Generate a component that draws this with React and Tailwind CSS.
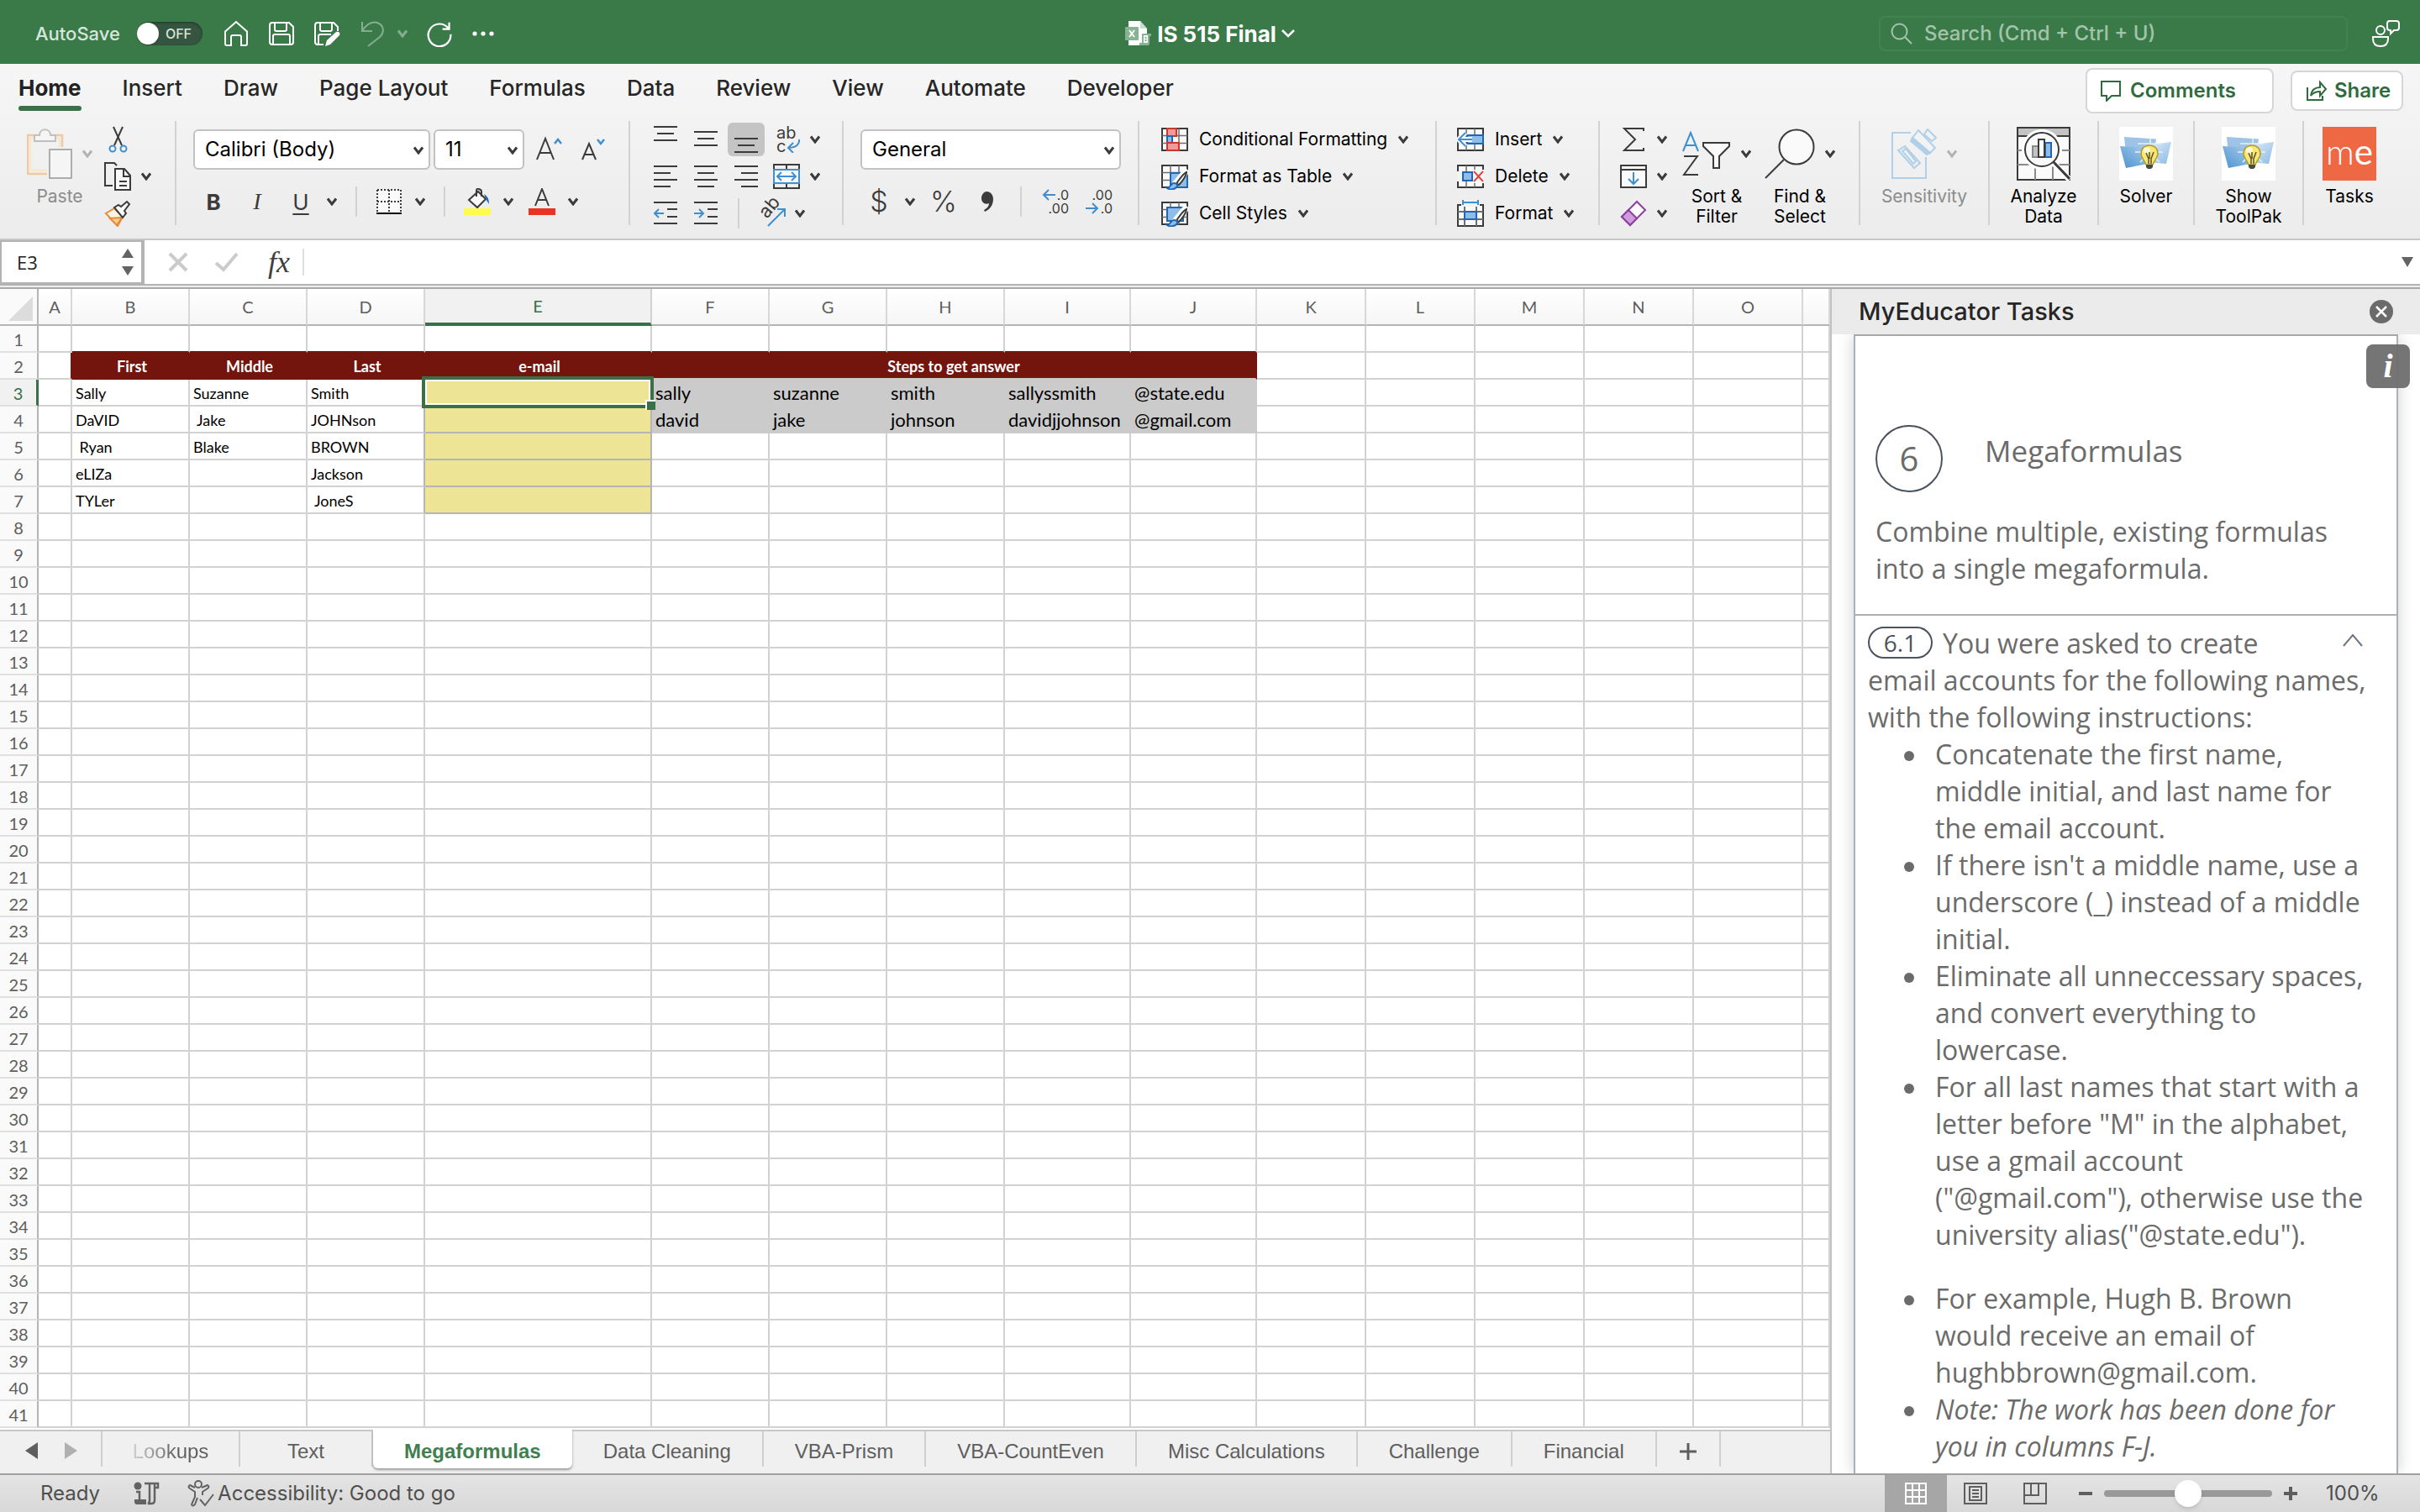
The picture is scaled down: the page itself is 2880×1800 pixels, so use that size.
import React, { useState } from 'react'

const TABS = ['Home', 'Insert', 'Draw', 'Page Layout', 'Formulas', 'Data', 'Review', 'View', 'Automate', 'Developer']

const COLUMNS = [
  { name: 'A', width: 'w-[40px]' },
  { name: 'B', width: 'w-[140px]' },
  { name: 'C', width: 'w-[140px]' },
  { name: 'D', width: 'w-[140px]' },
  { name: 'E', width: 'w-[270px]' },
  { name: 'F', width: 'w-[140px]' },
  { name: 'G', width: 'w-[140px]' },
  { name: 'H', width: 'w-[140px]' },
  { name: 'I', width: 'w-[150px]' },
  { name: 'J', width: 'w-[150px]' },
  { name: 'K', width: 'w-[130px]' },
  { name: 'L', width: 'w-[130px]' },
  { name: 'M', width: 'w-[130px]' },
  { name: 'N', width: 'w-[130px]' },
  { name: 'O', width: 'w-[130px]' },
  { name: '', width: '' },
]

const CELLS = {
  B2: 'First', C2: 'Middle', D2: 'Last', E2: 'e-mail', F2: 'Steps to get answer',
  B3: 'Sally', C3: 'Suzanne', D3: 'Smith', F3: 'sally', G3: 'suzanne', H3: 'smith', I3: 'sallyssmith', J3: '@state.edu',
  B4: 'DaVID', C4: ' Jake', D4: 'JOHNson', F4: 'david', G4: 'jake', H4: 'johnson', I4: 'davidjjohnson', J4: '@gmail.com',
  B5: ' Ryan', C5: 'Blake', D5: 'BROWN',
  B6: 'eLIZa', D6: 'Jackson',
  B7: 'TYLer', D7: ' JoneS',
}

const ROWS = Array.from({ length: 41 }, (_, i) => i + 1)

const SHEETS = ['Lookups', 'Text', 'Megaformulas', 'Data Cleaning', 'VBA-Prism', 'VBA-CountEven', 'Misc Calculations', 'Challenge', 'Financial']

/* ---------- small shared pieces ---------- */

function Chevron({ className = 'text-[#3b3b3b]' }) {
  return (
    <svg className={`w-3 h-2.5 shrink-0 ${className}`} viewBox="0 0 12 10" fill="none" stroke="currentColor" strokeWidth="3">
      <path d="M1 1.500 6 8l5-6.500" />
    </svg>
  )
}

function Divider({ small }) {
  return <div className={small ? 'w-0.5 h-9 bg-[#d2d2d2] shrink-0' : 'w-0.5 h-[124px] bg-[#d2d2d2] shrink-0'} />
}

function Icon({ box = '0 0 32 32', className = 'w-8 h-8', children }) {
  return (
    <svg className={`shrink-0 ${className}`} viewBox={box} fill="none" stroke="#3b3b3b" strokeWidth="2">
      {children}
    </svg>
  )
}

function Split({ label, gap = 'gap-[15px]', children }) {
  return (
    <button aria-label={label} className={`flex items-center ${gap}`}>
      {children}
      <Chevron />
    </button>
  )
}

function Select({ label, value, width }) {
  return (
    <div className={`relative h-12 ${width}`}>
      <select aria-label={label} className="w-full h-12 pl-3 appearance-none bg-white border-2 border-[#c2c2c2] rounded-md text-2xl text-black">
        <option>{value}</option>
      </select>
      <span className="absolute right-2 top-5 pointer-events-none"><Chevron /></span>
    </div>
  )
}

function BigButton({ lines, disabled, chevron, children }) {
  return (
    <button disabled={disabled} className={`flex flex-col items-center text-[21px] leading-6 ${disabled ? 'text-[#8c8c8c]' : 'text-black'}`}>
      <span className="h-[78px] flex items-center gap-3">
        {children}
        {chevron && <Chevron className={disabled ? 'text-[#b3b3b3]' : 'text-[#3b3b3b]'} />}
      </span>
      {lines.map((l) => <span key={l}>{l}</span>)}
    </button>
  )
}

function RowButton({ label, children }) {
  return (
    <button className="h-11 flex items-center gap-[13px] text-[21px] text-black">
      {children}
      <span>{label}</span>
      <Chevron />
    </button>
  )
}

/* ---------- icons ---------- */

function Lines({ rows }) {
  return (
    <Icon box="0 0 28 32" className="w-7 h-8">
      {rows.map(([x1, x2, y]) => <path key={y} d={`M${x1} ${y}H${x2}`} />)}
    </Icon>
  )
}

function GridIcon({ children }) {
  return (
    <Icon>
      <rect x="1" y="3" width="30" height="26" fill="#fafafa" />
      <path d="M1 11.500H31M1 20.500H31M11 3V29M21 3V29" stroke="#6e6e6e" strokeWidth="1.500" />
      {children}
    </Icon>
  )
}

function BrushOverlay() {
  return (
    <>
      <path d="M31 8 16 26" stroke="#fff" strokeWidth="8" />
      <path d="M30 11c-3 1-10 10-12 14l3 1c4-4 9-11 9-15z" fill="#fafafa" stroke="#3b3b3b" strokeWidth="2" />
      <path d="M7 30c4 0 4-6 8-6s5 3 3 5c-3 3-8 3-11 1z" fill="#8fbce8" stroke="#1f67b5" strokeWidth="2" />
    </>
  )
}

function BulbIcon() {
  return (
    <svg className="w-16 h-16 bg-white" viewBox="0 0 64 64">
      <defs>
        <linearGradient id="fan" x1="0" y1="1" x2="1" y2="0">
          <stop offset="0" stopColor="#4a92cf" />
          <stop offset="1" stopColor="#a9cdec" />
        </linearGradient>
        <linearGradient id="fanLight" x1="0" y1="0" x2="1" y2="1">
          <stop offset="0" stopColor="#e4f0fa" />
          <stop offset="1" stopColor="#8dbbe4" />
        </linearGradient>
      </defs>
      <path d="M6 12 44 14.500 41 36 8 34z" fill="#9dc3e6" />
      <path d="M30 22 62 18 56 44 34 42z" fill="url(#fanLight)" />
      <path d="M1 23 34 25 34 44 8 49z" fill="url(#fan)" />
      <path d="M37 14v8M22 20h28M19 30h7M46 30h6M25 42l4-4M48 42l-4-4" stroke="#e6f1fb" strokeWidth="1.500" />
      <path d="M36 22c-6 0-10 4-10 10 0 5 4 7 6 13h8c2-6 6-8 6-13 0-6-4-10-10-10z" fill="#f7e773" stroke="#b49a2d" strokeWidth="1.500" />
      <circle cx="33" cy="28" r="4" fill="#fdf9cf" />
      <path d="M32 31l3 7v6M41 30l-3 8v6M36 30v8" stroke="#5c5233" strokeWidth="1.500" fill="none" />
      <path d="M32 45h8v3l-2 2h-4l-2-2z" fill="#4a4a4a" />
    </svg>
  )
}

function TitleBar() {
  return (
    <header className="h-[76px] pt-1 shrink-0 bg-[#3a7a49] text-white grid grid-cols-[1fr_auto_1fr] items-center">
      <div className="flex items-center pl-[42px]">
        <span id="autosave" className="text-[22px] font-medium text-[#d8e5db]">AutoSave</span>
        <button role="switch" aria-checked="false" aria-labelledby="autosave" className="ml-5 w-[78px] h-7 rounded-full bg-[#355541] flex items-center gap-2 shadow-[inset_0_1px_3px_#1d3a26]">
          <span className="w-[26px] h-[26px] rounded-full bg-white shadow" />
          <span className="text-base font-medium text-[#d8e5db]">OFF</span>
        </button>
        <div className="flex items-center gap-[22px] ml-6">
          <button aria-label="Home">
            <svg className="w-8 h-8" viewBox="0 0 32 32" fill="none" stroke="#fff" strokeWidth="2">
              <path d="M3 13.500 16 2l13 11.500V28q0 2-2 2h-5V20q0-2-2-2h-8q-2 0-2 2v10H5q-2 0-2-2z" />
            </svg>
          </button>
          <button aria-label="Save">
            <svg className="w-8 h-8" viewBox="0 0 32 32" fill="none" stroke="#fff" strokeWidth="2">
              <path d="M5 3h20l5 5v18q0 3-3 3H5q-3 0-3-3V6q0-3 3-3zM8 3v8q0 2 2 2h10q2 0 2-2V3M6 29V19q0-2 2-2h16q2 0 2 2v10" />
            </svg>
          </button>
          <button aria-label="Save and edit">
            <svg className="w-8 h-8" viewBox="0 0 32 32" fill="none" stroke="#fff" strokeWidth="2">
              <path d="M12 29H5q-3 0-3-3V6q0-3 3-3h19l5 5v5M8 3v8q0 2 2 2h10q2 0 2-2V3M6 29V19q0-2 2-2h13" />
              <path d="M14 31l2-7L27 14q3-1 4 1t0 3L20 29z" fill="#fff" stroke="none" />
            </svg>
          </button>
          <button aria-label="Undo" className="flex items-center gap-3.5" disabled>
            <svg className="w-8 h-8" viewBox="0 0 32 32" fill="none" stroke="#85ad8e" strokeWidth="2">
              <path d="M4 2v11h12M4 13C9 5 15 1 22 3c8 3 9 11 3 17L11 31" />
            </svg>
            <Chevron className="text-[#85ad8e]" />
          </button>
          <button aria-label="Redo">
            <svg className="w-8 h-8" viewBox="0 0 36 36" fill="none" stroke="#fff" strokeWidth="2.500">
              <path d="M31 3v9h-9M30 11A15 15 0 1 0 33 19" />
            </svg>
          </button>
          <button aria-label="More">
            <svg className="w-7 h-7" viewBox="0 0 28 28" fill="#fff">
              <circle cx="4" cy="14" r="2.600" /><circle cx="14" cy="14" r="2.600" /><circle cx="24" cy="14" r="2.600" />
            </svg>
          </button>
        </div>
      </div>

      <button className="flex items-center gap-1.5 text-[26px] font-bold">
        <svg className="w-8 h-8" viewBox="0 0 32 32">
          <path d="M4 1h14l8 9v20H4z" fill="#fff" />
          <path d="M18 1l8 9h-8z" fill="#c9dccd" />
          <rect x="0" y="8" width="16" height="16" rx="1" fill="#86b393" />
          <path d="M5 12l6 8M11 12l-6 8" stroke="#fff" strokeWidth="2" />
          <path d="M20 16h11v3h-2v9q0 2-2 2H17v-3h3z" fill="#86b393" />
          <path d="M22 18h5v9h-5z" fill="#fff" />
          <path d="M24.500 20v5" stroke="#86b393" strokeWidth="2" strokeDasharray="2 1" />
        </svg>
        IS 515 Final
        <svg className="w-4 h-3" viewBox="0 0 16 12" fill="none" stroke="#fff" strokeWidth="2.500"><path d="M1 2l7 7 7-7" /></svg>
      </button>

      <div className="flex items-center justify-end pr-6">
        <label className="w-[558px] h-[42px] border-2 border-[#448252] rounded-lg flex items-center pl-3 gap-3.5">
          <svg className="w-[26px] h-[26px] shrink-0" viewBox="0 0 26 26" fill="none" stroke="#a3c3aa" strokeWidth="2">
            <circle cx="10.500" cy="10.500" r="9" /><path d="M17 17l8 8" />
          </svg>
          <input type="search" aria-label="Search" placeholder="Search (Cmd + Ctrl + U)" className="w-full bg-transparent outline-none text-2xl font-medium placeholder:text-[#a3c3aa]" />
        </label>
        <button aria-label="Presence" className="ml-7">
          <svg className="w-[34px] h-8" viewBox="0 0 34 32" fill="none" stroke="#fff" strokeWidth="2">
            <circle cx="11" cy="12" r="5" />
            <path d="M2 20h18v2q0 9-9 9t-9-9zM20 1h10q3 0 3 3v5q0 3-3 3h-3l-4 4v-4h-1q-3 0-3-3V4q0-3 3-3" />
          </svg>
        </button>
      </div>
    </header>
  )
}

function RibbonTabs() {
  const [tab, setTab] = useState('Home')
  return (
    <div className="h-[62px] flex items-start justify-between">
      <nav className="flex gap-[49px] pl-[22px] pt-3">
        {TABS.map((t) => (
          <button
            key={t}
            onClick={() => setTab(t)}
            className={`h-11 text-[26px] leading-[34px] flex flex-col justify-between whitespace-nowrap ${t === tab ? 'font-bold text-[#222]' : 'font-medium text-[#262626]'}`}
          >
            {t}
            {t === tab && <span className="w-full h-1.5 rounded-full bg-[#3a7048]" />}
          </button>
        ))}
      </nav>
      <div className="flex items-center gap-5 pr-5 pt-[5px] text-2xl font-semibold text-[#2f6b3e]">
        <button className="w-[224px] h-[54px] bg-white border-2 border-[#d6d6d6] rounded-lg flex items-center gap-2.5 pl-[15px]">
          <svg className="w-[26px] h-[26px]" viewBox="0 0 26 26" fill="none" stroke="#2f6b3e" strokeWidth="2"><path d="M2 2h22v17H14l-6 6v-6H2z" /></svg>
          Comments
        </button>
        <button className="w-[134px] h-12 bg-white border-2 border-[#d6d6d6] rounded-lg flex items-center gap-2 pl-4">
          <svg className="w-[26px] h-[26px]" viewBox="0 0 26 26" fill="none" stroke="#2f6b3e" strokeWidth="2">
            <path d="M2 9v15h18v-5M6 19c1-7 5-10 11-10V3l7 8-7 8v-5c-5 0-8 1-11 5z" />
          </svg>
          Share
        </button>
      </div>
    </div>
  )
}

function ClipboardGroup() {
  return (
    <div className="w-[208px] pl-8 flex gap-3.5">
      <BigButton lines={['Paste']} disabled chevron>
        <svg className="w-[54px] h-[60px]" viewBox="0 0 54 60" fill="none" strokeWidth="2">
          <path d="M24 54H1V8h41v14" stroke="#eec9a5" strokeWidth="2.500" />
          <path d="M24 50H4V11h35v11" stroke="#f5e8cd" strokeWidth="3" />
          <path d="M9 15V8h6c0-9 13-9 13 0h6v7z" fill="#f5f5f5" stroke="#c0c0c0" />
          <rect x="27" y="25" width="26" height="34" fill="#f5f5f5" stroke="#adadad" />
        </svg>
      </BigButton>
      <div className="flex flex-col">
        <button aria-label="Cut" className="h-11 flex items-center">
          <Icon className="w-8 h-8">
            <path d="M11 1l10 22M22 1L12 23" />
            <circle cx="10" cy="27" r="3.500" stroke="#3f8fd0" /><circle cx="23" cy="27" r="3.500" stroke="#3f8fd0" />
          </Icon>
        </button>
        <div className="h-11 flex items-center">
          <Split label="Copy" gap="gap-3">
            <Icon box="0 0 32 34" className="w-8 h-[34px]">
              <path d="M10 28H1V1h11l3 3" />
              <path d="M13 8h11l7 8v17H13z" fill="#fafafa" /><path d="M23 8v9h8M18 23h9M18 28h9" />
            </Icon>
          </Split>
        </div>
        <button aria-label="Format painter" className="h-11 flex items-center">
          <Icon>
            <path d="M2 16l10-6 10 10-6 11z" fill="#fdf3e4" stroke="#e58b3a" />
            <path d="M7 22l14-1-6 9z" fill="#f7cf93" stroke="#e58b3a" />
            <path d="M12 9l5-3 3 2 7-6 3 3-6 8 2 3-4 5z" fill="#fafafa" />
          </Icon>
        </button>
      </div>
    </div>
  )
}

function FontGroup() {
  return (
    <div className="w-[538px] pl-5 pt-2.5 flex flex-col gap-[18px]">
      <div className="flex items-center">
        <Select label="Font" value="Calibri (Body)" width="w-[282px]" />
        <div className="w-1" />
        <Select label="Font size" value="11" width="w-[108px]" />
        <button aria-label="Increase font size" className="ml-3.5">
          <Icon>
            <path d="M1 28L11 3l10 25M4.500 20h13" /><path d="M22 9l4-5 4 5" stroke="#3f8fd0" strokeWidth="2.500" />
          </Icon>
        </button>
        <button aria-label="Decrease font size" className="ml-[22px]">
          <Icon>
            <path d="M1 28L9 9l8 19M4 22h10" /><path d="M19 4l4 5 4-5" stroke="#3f8fd0" strokeWidth="2.500" />
          </Icon>
        </button>
      </div>
      <div className="h-10 flex items-center pl-2 text-[#3b3b3b]">
        <button className="w-8 font-bold text-[26px]">B</button>
        <button className="w-8 ml-5 font-['Liberation_Serif'] italic text-[28px]">I</button>
        <div className="ml-5">
          <Split label="Underline"><span className="w-8 text-center text-[26px] underline underline-offset-4 decoration-2">U</span></Split>
        </div>
        <div className="mx-[22px]"><Divider small /></div>
        <Split label="Borders">
          <Icon>
            <rect x="2" y="2" width="28" height="28" fill="#fafafa" stroke="none" />
            <path d="M2 2H30M2 16H30M2 2V28M16 2V28M30 2V28" strokeDasharray="2 2" />
            <path d="M1 30H31" stroke="#000" />
          </Icon>
        </Split>
        <div className="mx-[22px]"><Divider small /></div>
        <Split label="Fill color">
          <Icon>
            <path d="M6 14L17 4l9 9-10 10z" fill="#fafafa" /><path d="M15 10V3q0-3 3-2t3 3v6" />
            <path d="M24 7q6 3 6 12l-4-6" fill="#1f67b5" stroke="none" />
            <rect x="0" y="24" width="32" height="8" fill="#fffb4d" stroke="none" />
          </Icon>
        </Split>
        <div className="w-[18px]" />
        <Split label="Font color">
          <Icon>
            <path d="M8 21L16 1l8 20M11 14h10" />
            <rect x="0" y="24" width="32" height="8" fill="#e93323" stroke="none" />
          </Icon>
        </Split>
      </div>
    </div>
  )
}

function AlignGroup() {
  return (
    <div className="w-[252px] pl-7 flex flex-col">
      <div className="h-11 flex items-center">
        <button aria-label="Top align"><Lines rows={[[0, 28, 1], [4, 24, 9], [0, 28, 17]]} /></button>
        <button aria-label="Middle align" className="ml-5"><Lines rows={[[0, 28, 7], [4, 24, 15], [0, 28, 23]]} /></button>
        <button aria-label="Bottom align" className="ml-3 w-11 h-10 rounded-md bg-[#c4c4c4] flex items-center justify-center">
          <Lines rows={[[0, 28, 15], [4, 24, 23], [0, 28, 31]]} />
        </button>
        <div className="w-3.5" />
        <Split label="Wrap text" gap="gap-3">
          <span className="relative w-7 text-xl leading-4 text-left text-[#3b3b3b]">
            <span className="block">ab</span>
            <span className="block">c</span>
            <svg className="absolute right-0 bottom-0 w-4 h-4" viewBox="0 0 16 16" fill="none" stroke="#3f8fd0" strokeWidth="2"><path d="M15 0q1 9-12 10M8 4l-6 6 6 6" /></svg>
          </span>
        </Split>
      </div>
      <div className="h-11 flex items-center">
        <button aria-label="Align left"><Lines rows={[[0, 28, 4], [0, 20, 12], [0, 28, 20], [0, 20, 28]]} /></button>
        <button aria-label="Center" className="ml-5"><Lines rows={[[0, 28, 4], [4, 24, 12], [0, 28, 20], [4, 24, 28]]} /></button>
        <button aria-label="Align right" className="ml-5"><Lines rows={[[0, 28, 4], [8, 28, 12], [0, 28, 20], [8, 28, 28]]} /></button>
        <div className="w-[18px]" />
        <Split label="Merge cells" gap="gap-3">
          <Icon>
            <path d="M1 8V2H31V8M1 24V30H31V24M16 2v6M16 24v6" />
            <rect x="1" y="8" width="30" height="16" fill="#fafafa" stroke="#3f8fd0" />
            <path d="M5 16H27M10 11l-5 5 5 5M22 11l5 5-5 5" stroke="#3f8fd0" />
          </Icon>
        </Split>
      </div>
      <div className="h-11 flex items-center">
        <button aria-label="Decrease indent">
          <Icon box="0 0 28 32" className="w-7 h-8">
            <path d="M0 3H28M16 11H28M16 20H28M0 28H28" /><path d="M1 16H12M6 11l-5 5 5 5" stroke="#3f8fd0" />
          </Icon>
        </button>
        <button aria-label="Increase indent" className="ml-5">
          <Icon box="0 0 28 32" className="w-7 h-8">
            <path d="M0 3H28M16 11H28M16 20H28M0 28H28" /><path d="M0 16H11M6 11l5 5-5 5" stroke="#3f8fd0" />
          </Icon>
        </button>
        <div className="ml-6 mr-[22px]"><Divider small /></div>
        <Split label="Orientation" gap="gap-2.5">
          <span className="relative w-[34px] h-8">
            <span className="absolute left-0 -top-1 -rotate-50 text-[22px] leading-6 text-[#3b3b3b]">ab</span>
            <svg className="absolute right-0 bottom-0 w-6 h-6" viewBox="0 0 24 24" fill="none" stroke="#3f8fd0" strokeWidth="2"><path d="M2 23L22 3M13 3h9v9" /></svg>
          </span>
        </Split>
      </div>
    </div>
  )
}

function NumberGroup() {
  return (
    <div className="w-[350px] pl-5 pt-2.5 flex flex-col gap-[18px]">
      <Select label="Number format" value="General" width="w-[310px]" />
      <div className="h-10 flex items-center pl-1.5 text-[#3b3b3b]">
        <Split label="Currency"><span className="w-8 text-center text-[34px] leading-10 font-light">$</span></Split>
        <button className="w-8 ml-[18px] text-[34px] leading-10 font-light">%</button>
        <button aria-label="Comma style" className="w-8 ml-5 flex justify-center">
          <svg className="w-4 h-7" viewBox="0 0 16 28"><path d="M7 2c5 0 8 4 8 9 0 8-5 13-10 15l-1-2c4-2 6-5 6-8-5 2-9-1-9-6 0-4 3-8 6-8z" fill="#3b3b3b" /></svg>
        </button>
        <div className="ml-[23px] mr-6"><Divider small /></div>
        <button aria-label="Increase decimal" className="relative w-8 text-base leading-4 text-right">
          <span className="block">.0</span>
          <span className="block">.00</span>
          <svg className="absolute left-0 top-0 w-4 h-4" viewBox="0 0 16 16" fill="none" stroke="#3f8fd0" strokeWidth="2"><path d="M2 8H16M8 2L2 8l6 6" /></svg>
        </button>
        <button aria-label="Decrease decimal" className="relative w-8 ml-5 text-base leading-4 text-right">
          <span className="block">.00</span>
          <span className="block">.0</span>
          <svg className="absolute left-0 bottom-0 w-4 h-4" viewBox="0 0 16 16" fill="none" stroke="#3f8fd0" strokeWidth="2"><path d="M0 8H14M8 2l6 6-6 6" /></svg>
        </button>
      </div>
    </div>
  )
}

function StylesGroup() {
  return (
    <div className="w-[352px] pl-[26px] flex flex-col items-start">
      <RowButton label="Conditional Formatting">
        <GridIcon>
          <rect x="7" y="3" width="11" height="9" fill="#f19a9a" stroke="#c9382b" />
          <rect x="7" y="12" width="6" height="8" fill="#8fbce8" stroke="#1f67b5" />
          <rect x="7" y="20" width="14" height="9" fill="#f19a9a" stroke="#c9382b" />
        </GridIcon>
      </RowButton>
      <RowButton label="Format as Table">
        <GridIcon><path d="M11 12H31V29H11z" fill="#8fbce8" stroke="#1f67b5" /><BrushOverlay /></GridIcon>
      </RowButton>
      <RowButton label="Cell Styles">
        <GridIcon><path d="M7 9H26V25H7z" fill="#8fbce8" stroke="#1f67b5" /><BrushOverlay /></GridIcon>
      </RowButton>
    </div>
  )
}

function CellsGroup() {
  return (
    <div className="w-[192px] pl-6 flex flex-col items-start">
      <RowButton label="Insert">
        <GridIcon>
          <rect x="12" y="11" width="19" height="10" fill="#8fbce8" stroke="#1f67b5" />
          <path d="M2 16H18M10 8l-8 8 8 8" stroke="#fff" strokeWidth="6" /><path d="M2 16H18M10 8l-8 8 8 8" stroke="#3f8fd0" />
        </GridIcon>
      </RowButton>
      <RowButton label="Delete">
        <GridIcon>
          <rect x="0" y="10" width="7" height="12" fill="#f3f3f3" stroke="none" />
          <rect x="7" y="11" width="11" height="10" fill="#8fbce8" stroke="#1f67b5" />
          <rect x="19" y="8" width="13" height="16" fill="#f7f7f7" stroke="none" />
          <path d="M20 10l11 12M31 10L20 22" stroke="#e0463c" />
        </GridIcon>
      </RowButton>
      <RowButton label="Format">
        <Icon>
          <rect x="1" y="6" width="30" height="25" fill="#fafafa" />
          <path d="M1 14H31M1 23H31M9 6V31M23 6V31" stroke="#6e6e6e" />
          <rect x="9" y="14" width="14" height="9" fill="#8fbce8" stroke="#1f67b5" />
          <rect x="5" y="0" width="22" height="8" fill="#f3f3f3" stroke="none" />
          <path d="M7 3H25M7 0v6M25 0v6" stroke="#3f8fd0" />
        </Icon>
      </RowButton>
    </div>
  )
}

function EditingGroup() {
  return (
    <div className="w-[308px] pl-6 flex">
      <div className="flex flex-col">
        <div className="h-11 flex items-center">
          <Split label="AutoSum" gap="gap-3"><Icon><path d="M28 6V3H5l13 13L5 29h23v-3" /></Icon></Split>
        </div>
        <div className="h-11 flex items-center">
          <Split label="Fill" gap="gap-3">
            <Icon><rect x="1" y="3" width="30" height="26" fill="#fafafa" /><path d="M1 8H31" /><path d="M16 11V25M10 19l6 6 6-6" stroke="#3f8fd0" /></Icon>
          </Split>
        </div>
        <div className="h-11 flex items-center">
          <Split label="Clear" gap="gap-3">
            <Icon><path d="M20 2l10 10-18 18L2 20z" fill="#fafafa" stroke="#8e3fa0" /><path d="M10 12l10 10-8 8L2 20z" fill="#cf9cdb" stroke="#8e3fa0" /></Icon>
          </Split>
        </div>
      </div>
      <div className="w-[18px]" />
      <BigButton lines={['Sort &', 'Filter']} chevron>
        <Icon box="0 0 58 54" className="w-[58px] h-[54px]">
          <path d="M1 24L10 2l9 22M4 17h12" stroke="#3f8fd0" />
          <path d="M2 30h16L2 52h17" />
          <path d="M25 14h31v4L44 30v14h-7V30L25 18z" fill="#fafafa" />
        </Icon>
      </BigButton>
      <div className="w-4" />
      <BigButton lines={['Find &', 'Select']} chevron>
        <Icon box="0 0 60 60" className="w-[60px] h-[60px]">
          <circle cx="38" cy="22" r="20.500" fill="#fafafa" /><path d="M23 37L1 59" />
        </Icon>
      </BigButton>
    </div>
  )
}

function Ribbon() {
  return (
    <section className="shrink-0 bg-linear-to-b from-[#f6f6f6] to-[#ececec] border-b-2 border-[#c6c6c6]">
      <RibbonTabs />
      <div className="h-[146px] pt-1.5 flex items-start *:shrink-0">
        <ClipboardGroup />
        <Divider />
        <FontGroup />
        <Divider />
        <AlignGroup />
        <Divider />
        <NumberGroup />
        <Divider />
        <StylesGroup />
        <Divider />
        <CellsGroup />
        <Divider />
        <EditingGroup />
        <Divider />
        <div className="w-[152px] flex justify-center">
          <BigButton lines={['Sensitivity']} disabled chevron>
            <svg className="w-[54px] h-[60px]" viewBox="0 0 54 60" fill="none" stroke="#b0cfe8" strokeWidth="2">
              <path d="M23 5H1v54h40V34" />
              <path d="M8 26l8-5 18 20-7 6z" />
              <path d="M13 27l4-3 12 15-3 3z" />
              <path d="M39 7l4-6 10 10-5 4z" />
              <path d="M32 2l20 21-6 6-21-18z" fill="#f3f3f3" />
              <path d="M25 11l21 18-4 2-19-16z" fill="#b0cfe8" />
            </svg>
          </BigButton>
        </div>
        <Divider />
        <div className="w-[128px] flex justify-center">
          <BigButton lines={['Analyze', 'Data']}>
            <Icon box="0 0 64 64" className="w-16 h-16">
              <rect x="1" y="1" width="62" height="62" fill="#fafafa" />
              <rect x="2" y="2" width="60" height="8" fill="#c3c3c3" stroke="none" />
              <path d="M1 11H63" />
              <path d="M1 28H63M1 45H63M22 46V63M43 46V63" stroke="#8a8a8a" />
              <circle cx="30" cy="27" r="22" fill="#fafafa" stroke="#fff" strokeWidth="4" />
              <path d="M44 43L63 63" stroke="#fff" strokeWidth="7" />
              <circle cx="30" cy="27" r="20" fill="#fafafa" /><path d="M44 42L63 62" strokeWidth="3" />
              <rect x="19" y="23" width="7" height="13" fill="#c3c3c3" stroke="#8a8a8a" />
              <rect x="34" y="19" width="7" height="17" fill="#8fbce8" stroke="#1f67b5" />
              <rect x="26" y="15" width="7" height="21" fill="#fff" />
            </Icon>
          </BigButton>
        </div>
        <Divider />
        <div className="w-[112px] flex justify-center"><BigButton lines={['Solver']}><BulbIcon /></BigButton></div>
        <Divider />
        <div className="w-[128px] flex justify-center"><BigButton lines={['Show', 'ToolPak']}><BulbIcon /></BigButton></div>
        <Divider />
        <div className="w-[108px] flex justify-center">
          <BigButton lines={['Tasks']}>
            <span className="w-16 h-16 bg-[#ee6843] text-white font-['Lato'] text-[42px] leading-[58px]">
              <span className="font-light">m</span>e
            </span>
          </BigButton>
        </div>
      </div>
    </section>
  )
}

function FormulaBar() {
  return (
    <section className="h-[58px] shrink-0 bg-[#ededed] border-b-2 border-[#a9a9a9]">
      <div className="h-[54px] bg-white border-b-2 border-[#b3b3b3] flex items-center">
        <div className="w-[172px] h-[52px] border-2 border-[#b3b3b3] border-r-4 flex items-center pl-[18px] pr-2">
          <input aria-label="Name box" defaultValue="E3" className="w-[124px] outline-none font-['Open_Sans'] text-[22px] text-[#222]" />
          <svg className="w-4 h-9" viewBox="0 0 16 36" fill="#636363"><path d="M8 2l7 11H1zM8 34l7-11H1z" /></svg>
        </div>
        <button aria-label="Cancel" className="ml-7">
          <svg className="w-6 h-6" viewBox="0 0 24 24" stroke="#cbcbcb" strokeWidth="4"><path d="M2 2l20 20M22 2L2 22" /></svg>
        </button>
        <button aria-label="Enter" className="ml-8">
          <svg className="w-7 h-6" viewBox="0 0 28 24" fill="none" stroke="#cbcbcb" strokeWidth="4"><path d="M1 13l9 8L26 2" /></svg>
        </button>
        <button aria-label="Insert function" className="ml-8 w-8 font-['Liberation_Serif'] italic text-[36px] leading-8 text-[#3f3f3f]">fx</button>
        <div className="w-0.5 h-8 bg-[#dedede] ml-3" />
        <input aria-label="Formula" className="flex-1 h-10 ml-3 outline-none text-2xl" />
        <button aria-label="Expand formula bar" className="mr-2">
          <svg className="w-3.5 h-3" viewBox="0 0 14 12" fill="#636363"><path d="M0 0h14L7 12z" /></svg>
        </button>
      </div>
    </section>
  )
}

function cellStyle(col, row) {
  const line = 'border-[#d2d2d2]'
  if (row === 1 && col && 'BCDEFGHIJ'.includes(col)) return 'border-r-[#d2d2d2] border-b-[#73140d]'
  if (row === 2 && col === 'A') return 'border-b-[#d2d2d2] border-r-[#73140d]'
  if (row === 2 && col && 'BCDE'.includes(col)) return 'bg-[#73140d] border-[#73140d] text-center text-[18px] font-bold text-white'
  if ((row === 3 || row === 4) && col && 'FGHIJ'.includes(col)) return 'bg-[#cbcbcb] border-[#cbcbcb] text-[22px]'
  if (col === 'E' && row >= 3 && row <= 7) return 'bg-[#ede496] border-[#b5b5b5]'
  if (col === 'D' && row >= 3 && row <= 7) return 'border-b-[#d2d2d2] border-r-[#b5b5b5] text-[18px]'
  return `${line} text-[18px]`
}

function Sheet() {
  return (
    <div className="flex-1 min-h-0 overflow-hidden bg-white">
      <table className="w-full table-fixed border-separate border-spacing-0 font-['Lato'] text-black">
        <thead>
          <tr className="h-11 text-xl text-[#5e5e5e]">
            <th className="w-[46px] p-0 border-r-2 border-b-2 border-[#b5b5b5] bg-[#fafafa]">
              <svg className="w-[44px] h-[40px]" viewBox="0 0 44 40"><path d="M39 8V37H10z" fill="#dcdcdc" /></svg>
            </th>
            {COLUMNS.map((c) => (
              <th
                key={c.name}
                scope="col"
                className={`p-0 font-normal border-r-2 ${c.width} ${c.name === 'E' ? 'bg-[#f1f1f1] text-[#3a7048] border-b-4 border-b-[#3a7048] border-r-[#d2d2d2]' : 'bg-linear-to-b from-white to-[#f6f6f6] border-b-2 border-b-[#b5b5b5] border-r-[#d8d8d8]'}`}
              >
                {c.name}
              </th>
            ))}
          </tr>
        </thead>
        <tbody>
          {ROWS.map((row) => (
            <tr key={row} className="h-8 leading-7">
              <th
                scope="row"
                className={`p-0 align-bottom font-normal text-xl border-b-2 border-b-[#e0e0e0] ${row === 3 ? 'bg-[#f1f1f1] text-[#3a7048] border-r-[3px] border-r-[#3a7048]' : 'bg-[#fafafa] text-[#5e5e5e] border-r-2 border-r-[#b5b5b5]'}`}
              >
                {row}
              </th>
              {COLUMNS.map(({ name }) => {
                if (row === 2 && name && 'GHIJ'.includes(name)) return null
                if (row === 2 && name === 'F') {
                  return (
                    <td key={name} colSpan={5} className="p-0 align-bottom text-center text-[18px] font-bold text-white bg-[#73140d] border-r-2 border-b-2 border-r-[#73140d] border-b-[#cbcbcb]">
                      {CELLS.F2}
                    </td>
                  )
                }
                const active = name === 'E' && row === 3
                return (
                  <td key={name} className={`p-0 pl-1 align-bottom whitespace-pre border-r-2 border-b-2 ${cellStyle(name, row)} ${active ? 'relative' : ''}`}>
                    {CELLS[name + row]}
                    {active && (
                      <div className="absolute -inset-1 border-4 border-[#3a7048] shadow-[inset_0_0_0_2px_#fff]">
                        <span className="absolute -right-1.5 -bottom-1.5 w-3 h-3 bg-[#3a7048] border-t-2 border-l-2 border-white" />
                      </div>
                    )}
                  </td>
                )
              })}
            </tr>
          ))}
        </tbody>
      </table>
    </div>
  )
}

function SheetTabs() {
  const [sheet, setSheet] = useState('Megaformulas')
  const size = (name) => {
    if (name === 'Lookups') return 'w-[164px]'
    if (name === 'Text') return 'w-[158px]'
    return 'px-[37px]'
  }
  return (
    <nav className="h-[52px] shrink-0 flex items-start bg-[#f0f0f0] border-t-2 border-[#c8c8c8] font-['Liberation_Sans'] text-2xl text-[#5e5e5e]">
      <div className="w-[122px] h-[42px] pt-1 flex items-center gap-8 pl-[29px] border-r-2 border-[#cfcfcf]">
        <button aria-label="Previous sheet"><svg className="w-4 h-5" viewBox="0 0 16 20" fill="#5e5e5e"><path d="M16 0v20L1 10z" /></svg></button>
        <button aria-label="Next sheet"><svg className="w-4 h-5" viewBox="0 0 16 20" fill="#b0b0b0"><path d="M0 0v20l15-10z" /></svg></button>
      </div>
      {SHEETS.map((name) => (
        <button
          key={name}
          onClick={() => setSheet(name)}
          className={
            name === sheet
              ? 'h-[46px] -mt-0.5 pt-1.5 px-[37px] bg-white rounded-b-md font-bold text-[#3f8050] shadow-[0_2px_3px_#9a9a9a] whitespace-nowrap'
              : `h-[42px] pt-1.5 border-r-2 border-[#cfcfcf] whitespace-nowrap ${size(name)}`
          }
        >
          {name === 'Lookups' ? <span className="bg-linear-to-r from-[#cfcfcf] to-[#5e5e5e] to-60% bg-clip-text text-transparent">{name}</span> : name}
        </button>
      ))}
      <button aria-label="New sheet" className="w-[76px] h-[42px] pt-1.5 flex items-center justify-center border-r-2 border-[#cfcfcf]">
        <svg className="w-5 h-5" viewBox="0 0 20 20" stroke="#5e5e5e" strokeWidth="3"><path d="M10 0v20M0 10h20" /></svg>
      </button>
    </nav>
  )
}

function Bullet({ children }) {
  return (
    <li className="before:block before:float-left before:w-3 before:h-3 before:-ml-[37px] before:mt-[18px] before:rounded-full before:bg-[#6b6b6b]">
      {children}
    </li>
  )
}

function TaskPane() {
  return (
    <aside className="w-[702px] shrink-0 flex flex-col border-l-2 border-[#c2c2c2] bg-white">
      <div className="h-[54px] shrink-0 bg-[#ebebeb] flex items-center justify-between pl-8 pr-8">
        <h2 className="text-[29px] font-medium text-[#262626]">MyEducator Tasks</h2>
        <button aria-label="Close">
          <svg className="w-7 h-7" viewBox="0 0 28 28"><circle cx="14" cy="14" r="14" fill="#6b6b6b" /><path d="M8 8l12 12M20 8L8 20" stroke="#fff" strokeWidth="2.500" /></svg>
        </button>
      </div>
      <div className="relative flex-1 min-h-0 overflow-hidden px-[26px] font-['Open_Sans'] text-[32px] leading-[44px] text-[#6b6b6b]">
        <div className="min-h-full border-2 border-b-0 border-[#aab0b8] border-t-[#a6a6a6] shadow-[0_0_18px_#d0d0d0] bg-white">
          <div className="pt-[106px] pb-8 px-6 border-b-2 border-[#aab0b8]">
            <div className="flex items-start gap-[50px]">
              <span className="w-20 h-20 rounded-full border-2 border-[#4b535e] flex items-center justify-center text-[40px]">6</span>
              <h3 className="text-[35px] leading-[62px]">Megaformulas</h3>
            </div>
            <p className="mt-[25px]">Combine multiple, existing formulas into a single megaformula.</p>
          </div>
          <div className="pt-[11px] pl-[15px] pr-8">
            <button aria-label="Collapse" className="float-right h-9 ml-5 mr-2">
              <svg className="w-6 h-4" viewBox="0 0 24 16" fill="none" stroke="#6b737e" strokeWidth="2"><path d="M1 15L12 2l11 13" /></svg>
            </button>
            <p>
              <span className="inline-flex w-[77px] h-[38px] mt-0.5 mr-3 align-top items-center justify-center border-2 border-[#4b535e] rounded-full text-[28px] leading-8 text-[#4b535e] font-medium">6.1</span>
              You were asked to create email accounts for the following names, with the following instructions:
            </p>
            <ul className="pl-20">
              <Bullet>Concatenate the first name, middle initial, and last name for the email account.</Bullet>
              <Bullet>If there isn't a middle name, use a underscore (_) instead of a middle initial.</Bullet>
              <Bullet>Eliminate all unneccessary spaces, and convert everything to lowercase.</Bullet>
              <Bullet>For all last names that start with a letter before "M" in the alphabet, use a gmail account ("@gmail.com"), otherwise use the university alias("@state.edu").</Bullet>
            </ul>
            <ul className="pl-20 mt-8">
              <Bullet>For example, Hugh B. Brown would receive an email of hughbbrown@gmail.com.</Bullet>
              <Bullet><em>Note: The work has been done for you in columns F-J.</em></Bullet>
            </ul>
          </div>
        </div>
        <button aria-label="Info" className="absolute right-3 top-3 w-[52px] h-[52px] rounded-lg bg-[#6e6e6e]/95 font-['Liberation_Serif'] italic font-bold text-[40px] leading-[52px] text-white">i</button>
      </div>
    </aside>
  )
}

function StatusBar() {
  const [zoom, setZoom] = useState(50)
  return (
    <footer className="h-[46px] shrink-0 bg-linear-to-b from-[#e4e4e4] to-[#d8d8d8] border-t-2 border-[#a0a0a0] flex items-center text-2xl text-[#4f4f4f]">
      <span className="ml-12">Ready</span>
      <button aria-label="Record macro" className="ml-10">
        <svg className="w-8 h-7" viewBox="0 0 32 28" fill="none" stroke="#636363" strokeWidth="2.500">
          <circle cx="5" cy="5" r="4.500" fill="#636363" stroke="none" />
          <path d="M13 2h12v20q0 4-4 4h-4q2-1 2-4V3M25 2h4v5h-4" />
          <path d="M3 12h4v11" />
          <path d="M1 21h14v6H4q-3 0-3-3z" fill="#636363" stroke="none" />
        </svg>
      </button>
      <button className="ml-8 flex items-center gap-1">
        <svg className="w-8 h-8" viewBox="0 0 32 32" fill="none" stroke="#636363" strokeWidth="2">
          <circle cx="13" cy="5" r="4" />
          <path d="M9 9L3 6q-3 2 0 4l6 4v6L5 29q1 3 4 0l3-8M17 9l7-3q3 2 0 4l-6 4v4M15 23l6 7L31 17" />
        </svg>
        Accessibility: Good to go
      </button>
      <div className="ml-auto flex items-center h-full">
        <button aria-label="Normal view" className="w-[74px] h-full bg-[#a6a6a6] flex items-center justify-center">
          <svg className="w-7 h-7" viewBox="0 0 28 28" fill="none" stroke="#fff" strokeWidth="2"><path d="M2 2h24v24H2zM2 10h24M2 18h24M10 2v24M18 2v24" /></svg>
        </button>
        <button aria-label="Page layout view" className="ml-5">
          <svg className="w-7 h-7" viewBox="0 0 28 28" fill="none" stroke="#5e5e5e" strokeWidth="2"><path d="M1 2h26v24H1zM7 6h14v16H7zM10 10h8M10 14h8M10 18h8" /></svg>
        </button>
        <button aria-label="Page break view" className="ml-[43px]">
          <svg className="w-7 h-7" viewBox="0 0 28 28" fill="none" stroke="#5e5e5e" strokeWidth="2"><path d="M1 2h26v24H1zM1 16h17V2M9 2v14" /></svg>
        </button>
        <button aria-label="Zoom out" className="ml-[38px]"><svg className="w-4 h-4" viewBox="0 0 16 16" stroke="#5e5e5e" strokeWidth="4"><path d="M0 8h16" /></svg></button>
        <input
          type="range"
          aria-label="Zoom"
          value={zoom}
          onChange={(e) => setZoom(e.target.value)}
          className="w-[200px] h-2 mx-3.5 appearance-none rounded-full bg-[#999] [&::-webkit-slider-thumb]:appearance-none [&::-webkit-slider-thumb]:w-8 [&::-webkit-slider-thumb]:h-8 [&::-webkit-slider-thumb]:rounded-full [&::-webkit-slider-thumb]:bg-white [&::-webkit-slider-thumb]:shadow-md"
        />
        <button aria-label="Zoom in"><svg className="w-4 h-4" viewBox="0 0 16 16" stroke="#5e5e5e" strokeWidth="4"><path d="M0 8h16M8 0v16" /></svg></button>
        <span className="w-16 ml-[34px] mr-12">100%</span>
      </div>
    </footer>
  )
}

export default function App() {
  return (
    <div className="h-screen flex flex-col overflow-hidden bg-white font-['Inter',sans-serif]">
      <TitleBar />
      <Ribbon />
      <FormulaBar />
      <main className="flex-1 min-h-0 flex">
        <div className="flex-1 min-w-0 flex flex-col">
          <Sheet />
          <SheetTabs />
        </div>
        <TaskPane />
      </main>
      <StatusBar />
    </div>
  )
}
